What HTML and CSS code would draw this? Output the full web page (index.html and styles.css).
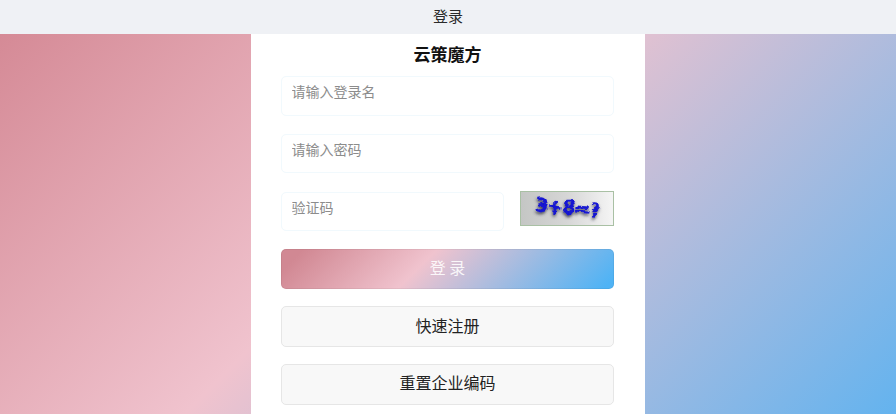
FILE: index.html
```html
<!DOCTYPE html>
<html lang="zh-CN">
<head>
<meta charset="utf-8">
<title>登录</title>
<link rel="stylesheet" href="styles.css">
</head>
<body>
<header class="topbar">登录</header>
<main class="stage">
  <form class="panel">
    <h1 class="brand">云策魔方</h1>
    <div class="field"><input class="input" type="text" placeholder="请输入登录名"></div>
    <div class="field"><input class="input" type="text" placeholder="请输入密码"></div>
    <div class="field captcha-row">
      <input class="input captcha-input" type="text" placeholder="验证码">
      <svg class="captcha" viewBox="0 0 94 35" aria-label="验证码图片">
        <defs>
          <linearGradient id="cap-bg" x1="0" y1="0" x2="1" y2="0">
            <stop offset="0" stop-color="#c4c6c4"/>
            <stop offset="0.5" stop-color="#d6d6d6"/>
            <stop offset="1" stop-color="#f5f5f5"/>
          </linearGradient>
          <filter id="cap-warp" x="-15%" y="-60%" width="130%" height="220%">
            <feTurbulence type="fractalNoise" baseFrequency="0.13 0.16" numOctaves="2" seed="7" result="n"/>
            <feDisplacementMap in="SourceGraphic" in2="n" scale="6" xChannelSelector="R" yChannelSelector="G" result="w"/>
            <feGaussianBlur in="w" stdDeviation="0.3" result="soft"/>
            <feDropShadow in="soft" dx="-0.5" dy="2" stdDeviation="1.6" flood-color="#333340" flood-opacity="0.9"/>
          </filter>
        </defs>
        <rect class="cap-frame" x="0.5" y="0.5" width="93" height="34" fill="url(#cap-bg)"/>
        <g filter="url(#cap-warp)"><text class="cap-text" x="15" y="23" transform="rotate(5 47 17)">3+8=?</text></g>
      </svg>
    </div>
    <button class="btn btn-primary" type="button">登 录</button>
    <button class="btn btn-plain" type="button">快速注册</button>
    <button class="btn btn-plain" type="button">重置企业编码</button>
  </form>
</main>
</body>
</html>
```
FILE: styles.css
```css
* { box-sizing: border-box; }
html, body { margin: 0; height: 100%; overflow: hidden; }
body {
  font-family: "Noto Sans CJK SC", "Liberation Sans", sans-serif;
  display: flex;
  flex-direction: column;
  background: #fff;
}
.topbar {
  height: 34px;
  flex: none;
  padding-bottom: 3px;
  display: flex;
  align-items: center;
  justify-content: center;
  background: #eff1f5;
  color: #2a2a2a;
  font-size: 15px;
}
.stage {
  flex: 1;
  display: flex;
  justify-content: center;
  background: linear-gradient(135deg, #d58a96 0%, #f0c3ce 44%, #62b3ef 100%);
}
.panel {
  width: 394px;
  background: #fff;
  padding: 0 31px 0 30px;
  display: flex;
  flex-direction: column;
}
.brand {
  margin: 0;
  height: 42px;
  line-height: 39px;
  text-align: center;
  font-size: 17px;
  font-weight: 700;
  color: #111;
}
.field { margin-bottom: 18.25px; }
.captcha-row { margin-bottom: 17.5px; display: flex; justify-content: space-between; align-items: flex-start; }
.input {
  display: block;
  width: 100%;
  height: 39.5px;
  padding: 0 10px 9px 9.5px;
  border: 1px solid #f1f9fd;
  border-radius: 5px;
  background: #fff;
  font: inherit;
  font-size: 14px;
  outline: none;
}
.input::placeholder { color: #8c8c8c; opacity: 1; }
.captcha-input { width: 223px; }
.captcha { width: 94px; height: 35px; flex: none; margin-top: -0.5px; }
.cap-frame { stroke: #a9c0a4; stroke-width: 1; }
.cap-text {
  font-family: "DejaVu Sans", sans-serif;
  font-size: 19px;
  font-weight: 700;
  letter-spacing: -0.9px;
  fill: #1414d2;
  stroke: #1414d2;
  stroke-width: 0.4px;
}
.btn {
  display: block;
  width: 100%;
  height: 40.5px;
  margin: 0 0 17.25px;
  padding: 0 0 4px;
  border-radius: 5px;
  font: inherit;
  font-size: 16px;
}
.btn-primary {
  border: 1px solid rgba(0, 0, 0, 0.05);
  background: linear-gradient(135deg, #d18893 6%, #f0c3ce 42%, #4fb3f5 97%) border-box;
  color: rgba(255, 255, 255, 0.88);
  padding-bottom: 3px;
}
.btn-plain {
  border: 1px solid #e6e6e6;
  background: #f8f8f8;
  color: #222;
}
```
